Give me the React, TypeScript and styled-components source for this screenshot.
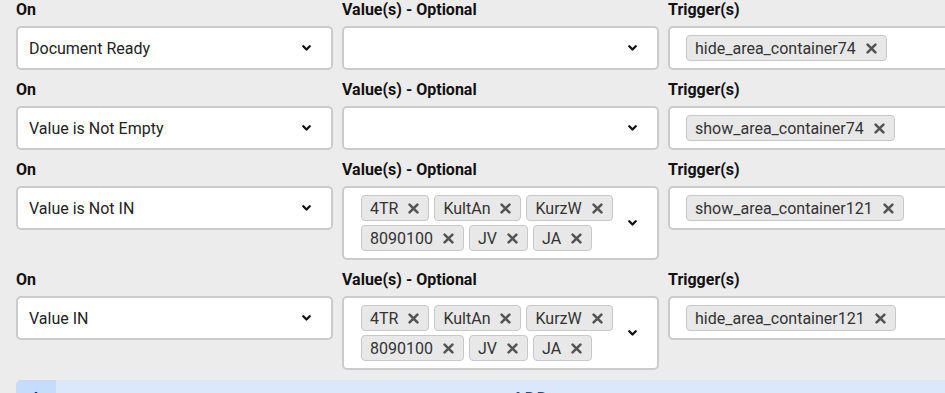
import React from 'react';
import styled, { createGlobalStyle } from 'styled-components';

const GlobalStyle = createGlobalStyle`
  body {
    margin: 0;
    background-color: #ececec;
    overflow: hidden;
    font-family: Roboto, "Liberation Sans", sans-serif;
  }
`;

const Page = styled.div`
  width: 985px;
  padding: 1px 0 0 16px;
  box-sizing: border-box;
`;

const RuleRow = styled.div`
  display: grid;
  grid-template-columns: repeat(3, 317px);
  column-gap: 9px;
  align-items: start;
  margin-bottom: 11px;
`;

const Field = styled.div`
  display: flex;
  flex-direction: column;
`;

const Label = styled.div`
  font-size: 16px;
  font-weight: 700;
  line-height: 17px;
  color: #111;
  margin-bottom: 8px;
`;

const Box = styled.div<{ $padLeft: number }>`
  display: flex;
  align-items: center;
  box-sizing: border-box;
  min-height: 44px;
  background: #fff;
  border: 2px solid #cbcbcb;
  border-radius: 5px;
  padding: 7px 20px 7px ${p => p.$padLeft}px;
`;

const Value = styled.span`
  flex: 1;
  font-size: 16px;
  color: #222;
`;

const TagList = styled.div`
  display: flex;
  flex-wrap: wrap;
  gap: 4px 5px;
  max-width: 262px;
`;

const Tag = styled.span`
  display: inline-flex;
  align-items: center;
  gap: 10px;
  box-sizing: border-box;
  height: 26px;
  padding: 0 9px 0 8px;
  background: #e8e8e8;
  border: 1px solid #c8c8c8;
  border-radius: 4px;
  font-size: 16px;
  color: #333;
`;

const Caret = styled.span`
  display: flex;
  margin-left: auto;
`;

const AddBar = styled.div`
  display: flex;
  align-items: stretch;
  height: 36px;
  margin-top: -1px;
  background: #dbe8fc;
  border-radius: 5px 0 0 0;
  overflow: hidden;
`;

const AddIcon = styled.div`
  width: 40px;
  display: flex;
  align-items: center;
  justify-content: center;
  background: #c6dcfb;
  color: #123f7a;
`;

const AddText = styled.div`
  flex: 1;
  display: flex;
  align-items: center;
  justify-content: center;
  padding-left: 20px;
  font-size: 17px;
  font-weight: 700;
  letter-spacing: 1px;
  color: #1c4b8c;
`;

function Chevron() {
  return (
    <Caret>
      <svg width="9" height="6" viewBox="0 0 9 6">
        <path d="M1.3 1.3 L4.5 4.5 L7.7 1.3" fill="none" stroke="#111" strokeWidth="2.3" strokeLinecap="round" strokeLinejoin="round" />
      </svg>
    </Caret>
  );
}

function Cross() {
  return (
    <svg width="11" height="11" viewBox="0 0 11 11">
      <path d="M1.6 1.6 L9.4 9.4 M9.4 1.6 L1.6 9.4" fill="none" stroke="#555" strokeWidth="2.6" strokeLinecap="round" />
    </svg>
  );
}

function TagItem({ text }: { text: string }) {
  return (
    <Tag>
      {text}
      <Cross />
    </Tag>
  );
}

type Rule = {
  on: string;
  values: string[];
  trigger: string;
};

const codes = ['4TR', 'KultAn', 'KurzW', '8090100', 'JV', 'JA'];

const rules: Rule[] = [
  { on: 'Document Ready', values: [], trigger: 'hide_area_container74' },
  { on: 'Value is Not Empty', values: [], trigger: 'show_area_container74' },
  { on: 'Value is Not IN', values: codes, trigger: 'show_area_container121' },
  { on: 'Value IN', values: codes, trigger: 'hide_area_container121' },
];

export default function App() {
  return (
    <Page>
      <GlobalStyle />
      {rules.map((rule, i) => (
        <RuleRow key={i}>
          <Field>
            <Label>On</Label>
            <Box $padLeft={11}>
              <Value>{rule.on}</Value>
              <Chevron />
            </Box>
          </Field>
          <Field>
            <Label>Value(s) - Optional</Label>
            <Box $padLeft={17}>
              {rule.values.length > 0 && (
                <TagList>
                  {rule.values.map(v => <TagItem key={v} text={v} />)}
                </TagList>
              )}
              <Chevron />
            </Box>
          </Field>
          <Field>
            <Label>Trigger(s)</Label>
            <Box $padLeft={16}>
              <TagItem text={rule.trigger} />
            </Box>
          </Field>
        </RuleRow>
      ))}
      <AddBar>
        <AddIcon>
          <svg width="14" height="14" viewBox="0 0 14 14">
            <path d="M7 1 V13 M1 7 H13" stroke="currentColor" strokeWidth="2.5" />
          </svg>
        </AddIcon>
        <AddText>ADD</AddText>
      </AddBar>
    </Page>
  );
}
